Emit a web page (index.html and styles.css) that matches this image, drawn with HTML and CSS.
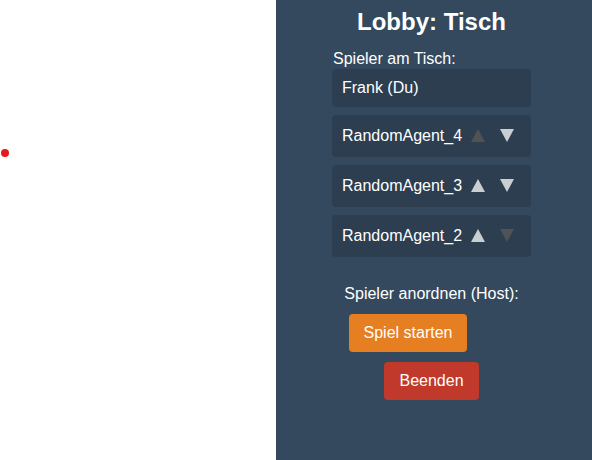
FILE: index.html
```html
<!DOCTYPE html>
<html lang="de">
<head>
<meta charset="utf-8">
<title>Lobby</title>
<link rel="stylesheet" href="styles.css">
</head>
<body>
<div class="app">
  <div class="canvas">
    <span class="dot"></span>
  </div>
  <aside class="panel">
    <div class="column">
      <h2 class="title">Lobby: Tisch</h2>
      <div class="label">Spieler am Tisch:</div>
      <ul class="players">
        <li class="player">Frank (Du)</li>
        <li class="player agent">
          <span class="name">RandomAgent_4</span>
          <button class="arrow" disabled aria-label="hoch"><svg class="tri" viewBox="0 0 14 13"><polygon points="7,0 14,13 0,13"/></svg></button>
          <button class="arrow" aria-label="runter"><svg class="tri" viewBox="0 0 14 13"><polygon points="0,0 14,0 7,13"/></svg></button>
        </li>
        <li class="player agent">
          <span class="name">RandomAgent_3</span>
          <button class="arrow" aria-label="hoch"><svg class="tri" viewBox="0 0 14 13"><polygon points="7,0 14,13 0,13"/></svg></button>
          <button class="arrow" aria-label="runter"><svg class="tri" viewBox="0 0 14 13"><polygon points="0,0 14,0 7,13"/></svg></button>
        </li>
        <li class="player agent">
          <span class="name">RandomAgent_2</span>
          <button class="arrow" aria-label="hoch"><svg class="tri" viewBox="0 0 14 13"><polygon points="7,0 14,13 0,13"/></svg></button>
          <button class="arrow" disabled aria-label="runter"><svg class="tri" viewBox="0 0 14 13"><polygon points="0,0 14,0 7,13"/></svg></button>
        </li>
      </ul>
      <div class="hint">Spieler anordnen (Host):</div>
      <button class="btn start">Spiel starten</button>
      <button class="btn quit">Beenden</button>
    </div>
  </aside>
</div>
</body>
</html>
```
FILE: styles.css
```css
html, body {
  margin: 0;
  padding: 0;
  height: 100%;
}
body {
  font-family: "Liberation Sans", Arial, sans-serif;
  font-size: 16px;
  color: #ffffff;
  background: #ffffff;
}
.app {
  display: flex;
  height: 460px;
}
.canvas {
  position: relative;
  width: 276px;
  flex: 0 0 276px;
  background: #ffffff;
}
.dot {
  position: absolute;
  left: 1px;
  top: 149px;
  width: 8px;
  height: 8px;
  border-radius: 50%;
  background: #e8191d;
}
.panel {
  flex: 1;
  background: #34495e;
  padding: 8px 0 0 56px;
}
.column {
  width: 199px;
  display: flex;
  flex-direction: column;
  align-items: center;
}
.title {
  margin: 0;
  font-size: 24px;
  line-height: 28px;
  font-weight: bold;
  text-align: center;
}
.label {
  align-self: stretch;
  margin-top: 14px;
  line-height: 18px;
  padding-left: 1px;
}
.players {
  list-style: none;
  margin: 1px 0 0 0;
  padding: 0;
  align-self: stretch;
  display: flex;
  flex-direction: column;
  gap: 8px;
}
.player {
  background: #2c3e50;
  border-radius: 4px;
  padding: 10px;
  line-height: 18px;
  display: flex;
  align-items: center;
}
.name {
  flex: 1;
}
.arrow {
  width: 29px;
  height: 22px;
  padding: 0;
  border: none;
  background: transparent;
  color: #c9ced1;
  display: flex;
  align-items: center;
  justify-content: center;
  cursor: pointer;
}
.arrow:disabled {
  color: #505354;
  cursor: default;
}
.tri {
  display: block;
  width: 14px;
  height: 13px;
  margin-top: -1px;
  fill: currentColor;
}
.hint {
  margin-top: 28px;
  line-height: 18px;
  text-align: center;
}
.btn {
  border: none;
  border-radius: 4px;
  color: #ffffff;
  font-family: "Liberation Sans", Arial, sans-serif;
  font-size: 16px;
  line-height: 18px;
  padding: 10px 15px;
  cursor: pointer;
}
.start {
  margin-top: 11px;
  margin-right: 47px;
  background: #e67e22;
}
.quit {
  margin-top: 10px;
  background: #c0392b;
}
```
